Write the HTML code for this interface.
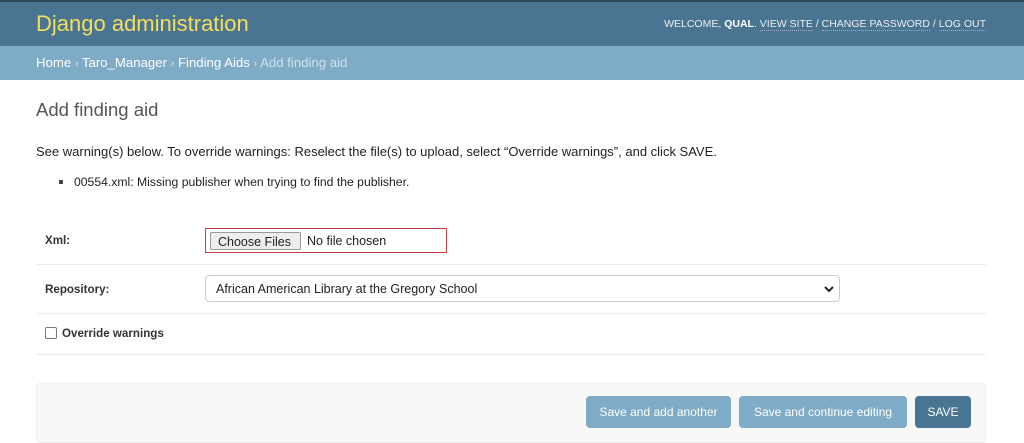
<!DOCTYPE html>
<html><head><style>
*{box-sizing:border-box;margin:0;padding:0}
body{width:1024px;height:437px;overflow:hidden;background:#fff;font-family:"Liberation Sans",sans-serif;color:#333;position:relative}
.hdr{position:absolute;left:0;top:0;width:1024px;height:46px;background:#4a7592;border-top:2px solid #2f4a5c}
.brand{position:absolute;left:36px;top:9px;font-size:22px;color:#f5dd5d;font-weight:300}
.user{position:absolute;right:38px;top:16px;font-size:10.5px;color:#eee;letter-spacing:0}
.user b{color:#fff}
.user span{border-bottom:1px dotted #aac}
.bc{position:absolute;left:0;top:46px;width:1024px;height:34px;background:#7eabc6;color:#fff;font-size:13.2px;padding:9px 36px}
.bc .c{color:#cfe2ee}
.bc .s{color:#cfe2ee;font-size:11px}
h1{position:absolute;left:36px;top:99px;font-size:18.5px;font-weight:300;color:#555}
.warn{position:absolute;left:36px;top:144px;font-size:13px;color:#222}
.li{position:absolute;left:60px;top:175px;font-size:12.2px;color:#222}
.li:before{content:"";position:absolute;left:-1px;top:5px;width:4px;height:4px;background:#444}
.li span{margin-left:14px}
.line{position:absolute;left:36px;width:950px;height:1px;background:#ececec}
.lbl{position:absolute;left:45px;font-size:11.6px;font-weight:bold;color:#333}
.file{position:absolute;left:205px;top:228px;width:242px;height:25px;border:1px solid #b44;font-size:12.5px;color:#222}
.file .b{position:absolute;left:4px;top:3px;height:18px;width:91px;background:#eee;border:1px solid #999;border-radius:2px;padding:2px 0 0 7px;font-size:12.5px}
.file .t{position:absolute;left:101px;top:5px}
.sel{position:absolute;left:205px;top:275px;width:635px;height:27px;border:1px solid #ccc;border-radius:4px;font-size:12.5px;color:#222;padding:6px 10px}
.sel svg{position:absolute;right:4px;top:9px}
.cb{position:absolute;left:45px;top:327px;width:12px;height:12px;border:1px solid #777;border-radius:2px}
.sub{position:absolute;left:36px;top:383px;width:950px;height:60px;background:#f8f8f8;border:1px solid #eee;border-radius:4px}
.btn{position:absolute;top:396px;height:32px;border-radius:4px;color:#fff;font-size:12px;text-align:center;line-height:32px;background:#7fabc6}
</style></head><body>
<div class="hdr"><div class="brand">Django administration</div>
<div class="user">WELCOME, <b>QUAL</b>. <span>VIEW SITE</span> / <span>CHANGE PASSWORD</span> / <span>LOG OUT</span></div></div>
<div class="bc">Home <span class="s">›</span> Taro_Manager <span class="s">›</span> Finding Aids <span class="s">›</span> <span class="c">Add finding aid</span></div>
<h1>Add finding aid</h1>
<div class="warn">See warning(s) below. To override warnings: Reselect the file(s) to upload, select “Override warnings”, and click SAVE.</div>
<div class="li"><span>00554.xml: Missing publisher when trying to find the publisher.</span></div>
<div class="lbl" style="top:234px">Xml:</div>
<div class="file"><div class="b">Choose Files</div><div class="t">No file chosen</div></div>
<div class="line" style="top:264px"></div>
<div class="lbl" style="top:283px">Repository:</div>
<div class="sel">African American Library at the Gregory School<svg width="12" height="9" viewBox="0 0 12 9"><path d="M2 2l4 4 4-4" stroke="#222" stroke-width="2" fill="none"/></svg></div>
<div class="line" style="top:313px"></div>
<div class="cb"></div><div class="lbl" style="left:62px;top:327px">Override warnings</div>
<div class="line" style="top:354px"></div>
<div class="sub"></div>
<div class="btn" style="left:586px;width:145px">Save and add another</div>
<div class="btn" style="left:739px;width:168px">Save and continue editing</div>
<div class="btn" style="left:915px;width:56px;background:#4a7592">SAVE</div>
</body></html>
